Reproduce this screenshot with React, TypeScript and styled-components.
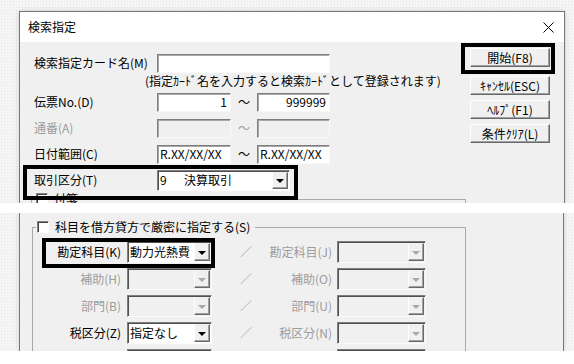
import styled, { createGlobalStyle } from 'styled-components';

const GlobalStyle = createGlobalStyle`
  html, body {
    margin: 0;
    padding: 0;
    background: #fff;
  }
  body {
    font-family: 'Noto Sans CJK JP', 'Noto Sans', sans-serif;
    font-size: 12px;
    color: #000;
  }
  * {
    box-sizing: border-box;
  }
`;

const DISABLED = '#9c9c9c';

const Page = styled.div`
  width: 574px;
  display: flex;
  flex-direction: column;
  gap: 10px;
`;

const Shot = styled.section<{ $h: number; $top?: boolean; $right: number }>`
  height: ${(p) => p.$h}px;
  display: flex;
  padding: ${(p) => (p.$top ? 11 : 0)}px ${(p) => p.$right}px 0 19px;
  background-color: #f5f5f5;
  background-image: radial-gradient(rgba(0, 0, 0, 0.06) 0.6px, transparent 0.7px);
  background-size: 3px 3px;
  overflow: hidden;
`;

const Window = styled.div<{ $top?: boolean }>`
  flex: 1;
  min-width: 0;
  display: flex;
  flex-direction: column;
  border: 1px solid #767676;
  border-bottom: none;
  border-top: ${(p) => (p.$top ? '1px solid #767676' : 'none')};
  box-shadow: 0 0 5px rgba(0, 0, 0, 0.16);
`;

const TitleBar = styled.header`
  height: 30px;
  flex-shrink: 0;
  display: flex;
  align-items: center;
  justify-content: space-between;
  padding: 0 10px 0 8px;
  background: #fff;
`;

const Title = styled.span`
  line-height: 1;
`;

const Body = styled.div`
  flex: 1;
  min-height: 0;
  display: flex;
  background: #f0f0f0;
  overflow: hidden;
`;

const Form = styled.div`
  flex: 1;
  min-width: 0;
  display: flex;
  flex-direction: column;
  padding: 11px 0 0 14px;
`;

const Row = styled.div<{ $h: number }>`
  position: relative;
  flex-shrink: 0;
  display: flex;
  align-items: center;
  height: ${(p) => p.$h}px;
`;

const Label = styled.span<{ $w: number; $disabled?: boolean; $right?: boolean; $gap?: number }>`
  width: ${(p) => p.$w}px;
  flex-shrink: 0;
  margin-right: ${(p) => p.$gap ?? 0}px;
  color: ${(p) => (p.$disabled ? DISABLED : '#000')};
  text-align: ${(p) => (p.$right ? 'right' : 'left')};
  white-space: nowrap;
  line-height: 1;
`;

const Note = styled.div`
  height: 16px;
  flex-shrink: 0;
  display: flex;
  align-items: center;
  padding-left: 111px;
  white-space: nowrap;
  line-height: 1;
`;

const TextBox = styled.div<{ $w: number; $right?: boolean; $disabled?: boolean }>`
  width: ${(p) => p.$w}px;
  height: 19px;
  flex-shrink: 0;
  display: flex;
  align-items: center;
  justify-content: ${(p) => (p.$right ? 'flex-end' : 'flex-start')};
  padding: 0 3px 0 2px;
  border: 1px solid;
  border-color: #7e7e7e #f8f8f8 #f8f8f8 #7e7e7e;
  box-shadow: inset 1px 1px #a8a8a8;
  background: ${(p) => (p.$disabled ? '#f0f0f0' : '#fff')};
  line-height: 1;
  white-space: nowrap;
`;

const Tilde = styled.span<{ $disabled?: boolean }>`
  width: 26px;
  flex-shrink: 0;
  text-align: center;
  color: ${(p) => (p.$disabled ? DISABLED : '#000')};
  line-height: 1;
`;

const ComboBox = styled.div<{ $w: number; $h: number; $disabled?: boolean }>`
  width: ${(p) => p.$w}px;
  height: ${(p) => p.$h}px;
  flex-shrink: 0;
  display: flex;
  align-items: stretch;
  padding: 1px;
  border: 1px solid;
  border-color: #7e7e7e #fbfbfb #fbfbfb #7e7e7e;
  box-shadow: inset 1px 1px #505050;
  background: ${(p) => (p.$disabled ? '#f0f0f0' : '#fff')};
`;

const ComboValue = styled.span`
  flex: 1;
  min-width: 0;
  display: flex;
  align-items: center;
  padding-left: 1px;
  white-space: nowrap;
  line-height: 1;
  overflow: hidden;
`;

const Code = styled.span`
  width: 24px;
  flex-shrink: 0;
`;

const DropButton = styled.span`
  width: 16px;
  flex-shrink: 0;
  display: flex;
  align-items: center;
  justify-content: center;
  padding-top: 2px;
  background: #f0f0f0;
  border: 1px solid;
  border-color: #f0f0f0 #6a6a6a #6a6a6a #fff;
  box-shadow: inset -1px -1px #a0a0a0;
`;

const Caret = styled.span<{ $disabled?: boolean }>`
  width: 0;
  height: 0;
  border-left: 4px solid transparent;
  border-right: 4px solid transparent;
  border-top: 4px solid ${(p) => (p.$disabled ? '#a8a8a8' : '#000')};
`;

const Highlight = styled.div<{ $t: number; $l: number; $w: number; $h: number }>`
  position: absolute;
  top: ${(p) => p.$t}px;
  left: ${(p) => p.$l}px;
  width: ${(p) => p.$w}px;
  height: ${(p) => p.$h}px;
  border: 4px solid #000;
  pointer-events: none;
  z-index: 2;
`;

const GroupBox = styled.fieldset<{ $w: number; $x: number; $y: number }>`
  width: ${(p) => p.$w}px;
  flex-shrink: 0;
  margin: ${(p) => p.$y}px 0 0 ${(p) => p.$x}px;
  padding: 7px 0 0 0;
  min-width: 0;
  border: 1px solid #a9a9a9;
  border-bottom: none;
`;

const Legend = styled.legend`
  display: flex;
  align-items: center;
  gap: 6px;
  height: 14px;
  margin-left: 3px;
  padding: 0 5px 0 1px;
  line-height: 1;
  white-space: nowrap;
`;

const CheckBox = styled.span`
  width: 12px;
  height: 12px;
  flex-shrink: 0;
  background: #fff;
  border: 1px solid;
  border-color: #848484 #fff #fff #848484;
  box-shadow: inset 1px 1px #404040;
`;

const Rows = styled.div`
  display: flex;
  flex-direction: column;
  gap: 5px;
`;

const Slash = styled.span`
  width: 40px;
  flex-shrink: 0;
  text-align: right;
  color: #b0b0b0;
  line-height: 1;
`;

const ButtonColumn = styled.div`
  width: 94px;
  flex-shrink: 0;
  display: flex;
  flex-direction: column;
  align-items: flex-start;
  gap: 5px;
  padding: 6px 14px 0 0;
`;

const ButtonSlot = styled.div<{ $spaced?: boolean }>`
  position: relative;
  margin-bottom: ${(p) => (p.$spaced ? 4 : 0)}px;
`;

const Button = styled.button`
  width: 80px;
  height: 19px;
  padding: 0;
  display: flex;
  align-items: center;
  justify-content: center;
  font-family: inherit;
  font-size: 12px;
  line-height: 1;
  color: #000;
  background: #f0f0f0;
  border: 1px solid;
  border-color: #fff #696969 #696969 #fff;
  box-shadow: inset -1px -1px #a0a0a0;
  white-space: nowrap;
`;

const CloseIcon = () => (
  <svg width="11" height="11" viewBox="0 0 11 11">
    <path d="M0.5 0.5 L10.5 10.5 M10.5 0.5 L0.5 10.5" stroke="#000" strokeWidth="1" fill="none" />
  </svg>
);

type ComboProps = {
  w: number;
  h?: number;
  disabled?: boolean;
  children?: React.ReactNode;
};

const Combo = ({ w, h = 22, disabled, children }: ComboProps) => (
  <ComboBox $w={w} $h={h} $disabled={disabled}>
    <ComboValue>{children}</ComboValue>
    <DropButton>
      <Caret $disabled={disabled} />
    </DropButton>
  </ComboBox>
);

const accountRows = [
  { left: '勘定科目(K)', right: '勘定科目(J)', value: '動力光熱費', enabled: true },
  { left: '補助(H)', right: '補助(O)' },
  { left: '部門(B)', right: '部門(U)' },
  { left: '税区分(Z)', right: '税区分(N)', value: '指定なし', enabled: true },
  { left: '', right: '' },
];

const App = () => {
  return (
    <Page>
      <GlobalStyle />
      <Shot $h={203} $top $right={9}>
        <Window $top>
          <TitleBar>
            <Title>検索指定</Title>
            <CloseIcon />
          </TitleBar>
          <Body>
            <Form>
              <Row $h={20}>
                <Label $w={123}>検索指定カード名(M)</Label>
                <TextBox $w={173} />
              </Row>
              <Note>(指定ｶｰﾄﾞ名を入力すると検索ｶｰﾄﾞとして登録されます)</Note>
              <Row $h={26}>
                <Label $w={123}>伝票No.(D)</Label>
                <TextBox $w={74} $right>1</TextBox>
                <Tilde>～</Tilde>
                <TextBox $w={73} $right>999999</TextBox>
              </Row>
              <Row $h={26}>
                <Label $w={123} $disabled>通番(A)</Label>
                <TextBox $w={74} $disabled />
                <Tilde $disabled>～</Tilde>
                <TextBox $w={73} $disabled />
              </Row>
              <Row $h={26}>
                <Label $w={123}>日付範囲(C)</Label>
                <TextBox $w={74}>R.XX/XX/XX</TextBox>
                <Tilde>～</Tilde>
                <TextBox $w={73}>R.XX/XX/XX</TextBox>
              </Row>
              <Row $h={26}>
                <Label $w={123}>取引区分(T)</Label>
                <Combo w={133} h={21}>
                  <Code>9</Code>決算取引
                </Combo>
                <Highlight $t={-2} $l={-11} $w={275} $h={35} />
              </Row>
              <GroupBox $w={435} $x={-3} $y={-1}>
                <Legend>
                  <CheckBox />
                  付箋
                </Legend>
              </GroupBox>
            </Form>
            <ButtonColumn>
              <ButtonSlot $spaced>
                <Button>開始(F8)</Button>
                <Highlight $t={-5} $l={-9} $w={94} $h={31} />
              </ButtonSlot>
              <Button>ｷｬﾝｾﾙ(ESC)</Button>
              <Button>ﾍﾙﾌﾟ(F1)</Button>
              <Button>条件ｸﾘｱ(L)</Button>
            </ButtonColumn>
          </Body>
        </Window>
      </Shot>
      <Shot $h={138} $right={10}>
        <Window>
          <Body>
            <GroupBox $w={434} $x={12} $y={7}>
              <Legend>
                <CheckBox />
                科目を借方貸方で厳密に指定する(S)
              </Legend>
              <Rows>
                {accountRows.map((r, i) => (
                  <Row $h={22} key={i}>
                    <Label $w={88} $gap={6} $right $disabled={!r.enabled}>
                      {r.left}
                    </Label>
                    <Combo w={85} disabled={!r.enabled}>
                      {r.value}
                    </Combo>
                    <Slash>{r.left ? '／' : ''}</Slash>
                    <Label $w={80} $gap={5} $right $disabled>
                      {r.right}
                    </Label>
                    <Combo w={89} disabled />
                    {i === 0 && <Highlight $t={-3} $l={9} $w={173} $h={30} />}
                  </Row>
                ))}
              </Rows>
            </GroupBox>
          </Body>
        </Window>
      </Shot>
    </Page>
  );
};

export default App;
